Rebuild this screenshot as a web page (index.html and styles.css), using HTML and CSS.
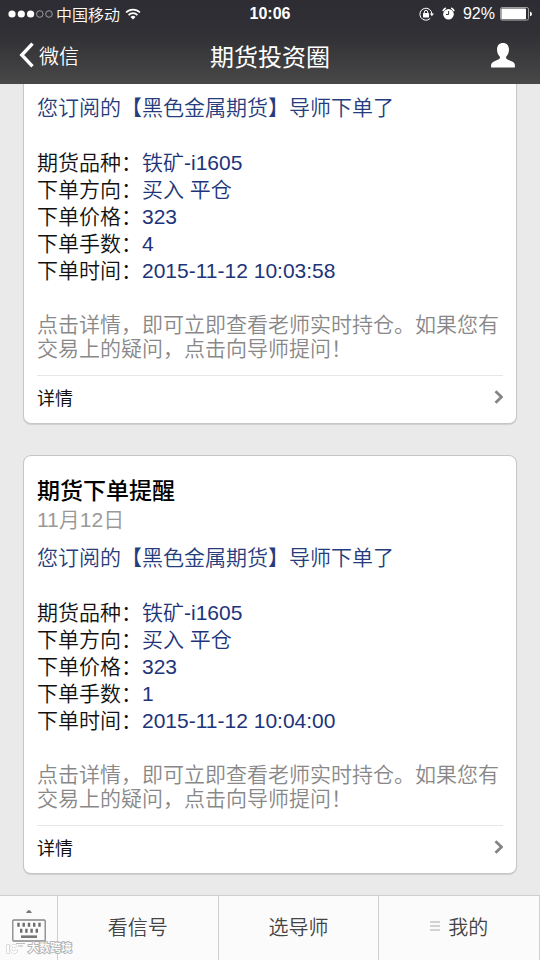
FILE: index.html
```html
<!DOCTYPE html>
<html lang="zh-CN">
<head>
<meta charset="utf-8">
<meta name="viewport" content="width=device-width, initial-scale=1">
<title>期货投资圈</title>
<link rel="stylesheet" href="styles.css">
</head>
<body>
<header class="top">
  <div class="status">
    <div class="status-side">
      <svg class="signal" width="45" height="10" viewBox="0 0 45 10" aria-hidden="true">
        <g fill="#fff"><circle cx="4" cy="5" r="3.6"/><circle cx="13.3" cy="5" r="3.6"/><circle cx="22.6" cy="5" r="3.6"/></g>
        <g fill="none" stroke="#b5b5b8" stroke-width=".8"><circle cx="31.8" cy="5" r="3.3"/><circle cx="41" cy="5" r="3.3"/></g>
      </svg>
      <span class="carrier">中国移动</span>
      <svg class="wifi" width="16" height="12" viewBox="0 0 18 13" aria-hidden="true">
        <g fill="none" stroke="#fff" stroke-width="1.9"><path d="M1.2 4.8a11 11 0 0 1 15.6 0"/><path d="M4 7.7a7 7 0 0 1 10 0"/></g>
        <path d="M9 12.6 6.2 9.8a4 4 0 0 1 5.6 0z" fill="#fff"/>
      </svg>
    </div>
    <span class="clock">10:06</span>
    <div class="status-side status-right">
      <svg width="15" height="14" viewBox="0 0 15 14" aria-hidden="true">
        <path d="M11.2 11.4A6 6 0 1 1 12.9 7" fill="none" stroke="#fff"/>
        <path d="M10.8 6.6h4.1l-2 2.7z" fill="#fff"/>
        <rect x="4" y="6" width="6" height="4.4" rx=".5" fill="#fff"/>
        <path d="M5.3 6.2V5a1.7 1.7 0 0 1 3.400 0v1.2" fill="none" stroke="#fff"/>
      </svg>
      <svg class="alarm" width="13" height="14" viewBox="0 0 13 14" aria-hidden="true">
        <circle cx="6.5" cy="7.2" r="5.300" fill="#fff"/>
        <path d="M.9 4A7 7 0 0 1 3.8 1.1M9.2 1.1A7 7 0 0 1 12.1 4" fill="none" stroke="#fff" stroke-width="1.7"/>
        <path d="M6.6 4v3.5H4" fill="none" stroke="#35343a"/>
      </svg>
      <span class="percent">92%</span>
      <svg class="battery" width="32" height="14" viewBox="0 0 32 14" aria-hidden="true">
        <rect x=".5" y=".5" width="28" height="12.6" rx="1.6" fill="none" stroke="#bbb" stroke-width=".8"/>
        <rect x="1.4" y="1.4" width="24.6" height="10.8" rx=".6" fill="#fff"/>
        <path d="M30 4.6q2 .6 2 2.3t-2 2.3z" fill="#fff"/>
      </svg>
    </div>
  </div>
  <div class="nav">
    <button class="back" type="button">
      <svg width="16" height="26" viewBox="0 0 16 26" aria-hidden="true"><path d="M13.5 1.7 2.8 13l10.7 11.3" fill="none" stroke="#fff" stroke-width="3.4"/></svg>
      <span>微信</span>
    </button>
    <h1 class="title">期货投资圈</h1>
    <button class="profile" type="button" aria-label="资料">
      <svg width="24" height="25" viewBox="0 0 24 25" aria-hidden="true"><path d="M12 0c3.8 0 6 2.7 6 6.5 0 3-1.1 5.200-2.500 6.700-.8 1-.5 2.500.6 3.100 2.200 1.200 5.800 1.900 7.200 4 .7 1 .8 2.500.5 4.200H.2c-.3-1.700-.2-3.200.5-4.200 1.400-2.100 5-2.800 7.200-4 1.100-.6 1.400-2.100.6-3.100C7.100 11.700 6 9.500 6 6.500 6 2.700 8.200 0 12 0z" fill="#fff"/></svg>
    </button>
  </div>
</header>

<main class="feed">
  <article class="card card-cut">
    <p class="promo">您订阅的【黑色金属期货】导师下单了</p>
    <dl class="order">
      <div><dt>期货品种：</dt><dd>铁矿-i1605</dd></div>
      <div><dt>下单方向：</dt><dd>买入 平仓</dd></div>
      <div><dt>下单价格：</dt><dd>323</dd></div>
      <div><dt>下单手数：</dt><dd>4</dd></div>
      <div><dt>下单时间：</dt><dd>2015-11-12 10:03:58</dd></div>
    </dl>
    <p class="hint">点击详情，即可立即查看老师实时持仓。如果您有交易上的疑问，点击向导师提问！</p>
    <a class="detail" href="#">详情
      <svg width="10" height="14" viewBox="0 0 10 14" aria-hidden="true"><path d="m2.500 1.200 6 5.800-6 5.800" fill="none" stroke="#858585" stroke-width="2.800"/></svg>
    </a>
  </article>

  <article class="card">
    <h2 class="card-title">期货下单提醒</h2>
    <time class="date" datetime="2015-11-12">11月12日</time>
    <p class="promo">您订阅的【黑色金属期货】导师下单了</p>
    <dl class="order">
      <div><dt>期货品种：</dt><dd>铁矿-i1605</dd></div>
      <div><dt>下单方向：</dt><dd>买入 平仓</dd></div>
      <div><dt>下单价格：</dt><dd>323</dd></div>
      <div><dt>下单手数：</dt><dd>1</dd></div>
      <div><dt>下单时间：</dt><dd>2015-11-12 10:04:00</dd></div>
    </dl>
    <p class="hint">点击详情，即可立即查看老师实时持仓。如果您有交易上的疑问，点击向导师提问！</p>
    <a class="detail" href="#">详情
      <svg width="10" height="14" viewBox="0 0 10 14" aria-hidden="true"><path d="m2.500 1.200 6 5.800-6 5.800" fill="none" stroke="#858585" stroke-width="2.800"/></svg>
    </a>
  </article>
</main>

<nav class="tabs">
  <button class="tab tab-keys" type="button" aria-label="键盘">
    <svg width="34" height="34" viewBox="0 0 34 34" aria-hidden="true">
      <path d="M14 4h6l-2-2.700h-2z" fill="#777"/>
      <rect x=".8" y="11" width="32.400" height="21" rx="1" fill="none" stroke="#858585" stroke-width="1.300"/>
      <path d="M6.500 13.700v4m5.200-4v4m5.300-4v4m5.200-4v4m5.300-4v4M9.200 19.700v4m5.200-4v4m5.200-4v4m5.200-4v4" stroke="#6c6c6c" stroke-width="2.400"/>
      <path d="M9 27.700h16" stroke="#777" stroke-width="2.600"/>
    </svg>
  </button>
  <button class="tab" type="button">看信号</button>
  <button class="tab" type="button">选导师</button>
  <button class="tab" type="button">
    <svg width="10" height="10" viewBox="0 0 10 10" aria-hidden="true"><path d="M0 1h10M0 5h10M0 9h10" stroke="#aaa"/></svg>
    我的
  </button>
</nav>
<div class="watermark">
  <svg width="20" height="13" viewBox="0 0 20 13" aria-hidden="true">
    <g fill="#fff" stroke="#b5b5b5" stroke-width=".9"><path d="M1 2.500h2.500v9H1z"/><path d="M11 3.500A4.300 4.300 0 1 0 12 9l-2.200-1a2.200 2.200 0 1 1-.5-2.800z"/><path d="M10 1.500h9M12 4h5"/></g>
  </svg>
  <span>大数跨境</span>
</div>
</body>
</html>
```
FILE: styles.css
```css
* {
  box-sizing: border-box;
}

body {
  margin: 0;
  height: 100vh;
  display: flex;
  flex-direction: column;
  background: #eaeaea;
  color: #111;
  font-family: "Liberation Sans", "Noto Sans CJK SC", sans-serif;
  font-size: 21px;
  font-weight: 350;
}

h1, h2, p, dl, dd {
  margin: 0;
}

button {
  font: inherit;
  color: inherit;
  background: none;
  border: 0;
  padding: 0;
}

svg {
  display: block;
  flex: none;
}

/* Status bar and navigation */
.top {
  flex: none;
  color: #fff;
  background: linear-gradient(#2d2c33, #303035 40%, #484848);
}

.status,
.nav {
  display: grid;
  grid-template-columns: 1fr auto 1fr;
  align-items: center;
}

.status {
  height: 28px;
  padding: 0 8px;
  font-size: 16px;
}

.status-side {
  display: flex;
  align-items: center;
}

.carrier {
  margin: 0 5px 0 3px;
}

.clock {
  font-weight: 700;
}

.status-right {
  justify-content: flex-end;
}

.alarm {
  margin: 0 8px;
}

.percent {
  margin-right: 5px;
}

.nav {
  height: 56px;
  padding: 0 19px 2px;
}

.back {
  display: flex;
  align-items: center;
  gap: 4px;
  font-size: 20px;
}

.title {
  font-size: 24px;
  font-weight: 400;
}

.profile {
  justify-self: end;
  padding-right: 6px;
}

/* Message feed, kept at its latest entry */
.feed {
  flex: 1;
  min-height: 0;
  overflow: hidden;
  display: flex;
  flex-direction: column;
  justify-content: flex-end;
  gap: 31px;
  padding: 0 23px 21px;
}

.card {
  flex: none;
  padding: 20px 13px 0;
  background: #fff;
  border: 1px solid #c6c6c6;
  border-radius: 8px;
  box-shadow: 0 1px 1px #cfcfcf;
}

.card-cut {
  padding-top: 12px;
  border-top: 0;
  border-radius: 0 0 8px 8px;
}

.card-title {
  font-size: 23px;
  font-weight: 500;
  line-height: 30px;
  color: #000;
}

.date {
  display: block;
  margin-bottom: 9px;
  line-height: 28px;
  color: #999;
}

.promo {
  line-height: 30px;
  color: #253c7d;
}

.order {
  margin: 26px 0 29px;
  line-height: 27px;
}

.order div {
  display: flex;
}

.order dd {
  color: #1d3479;
}

.hint {
  line-height: 24px;
  color: #888;
}

.detail {
  display: flex;
  align-items: center;
  justify-content: space-between;
  height: 48px;
  margin-top: 14px;
  padding-bottom: 6px;
  border-top: 1px solid #e6e6e6;
  font-size: 18px;
  font-weight: 400;
  color: #111;
  text-decoration: none;
}

/* Bottom menu */
.tabs {
  flex: none;
  display: grid;
  grid-template-columns: 58px 1fr 1fr 1fr;
  height: 65px;
  background: #fbfbfb;
  border-top: 1px solid #cfcfcf;
}

.tab {
  display: flex;
  align-items: center;
  justify-content: center;
  gap: 8px;
  padding-bottom: 4px;
  border-right: 1px solid #cfcfcf;
  font-size: 20px;
  color: #444;
}

.watermark {
  position: absolute;
  left: 6px;
  bottom: 4px;
  display: flex;
  align-items: center;
  gap: 2px;
  font-size: 11px;
  line-height: 16px;
  font-weight: 500;
  color: #fff;
  -webkit-text-stroke: 2px #b5b5b5;
  paint-order: stroke fill;
}
```
